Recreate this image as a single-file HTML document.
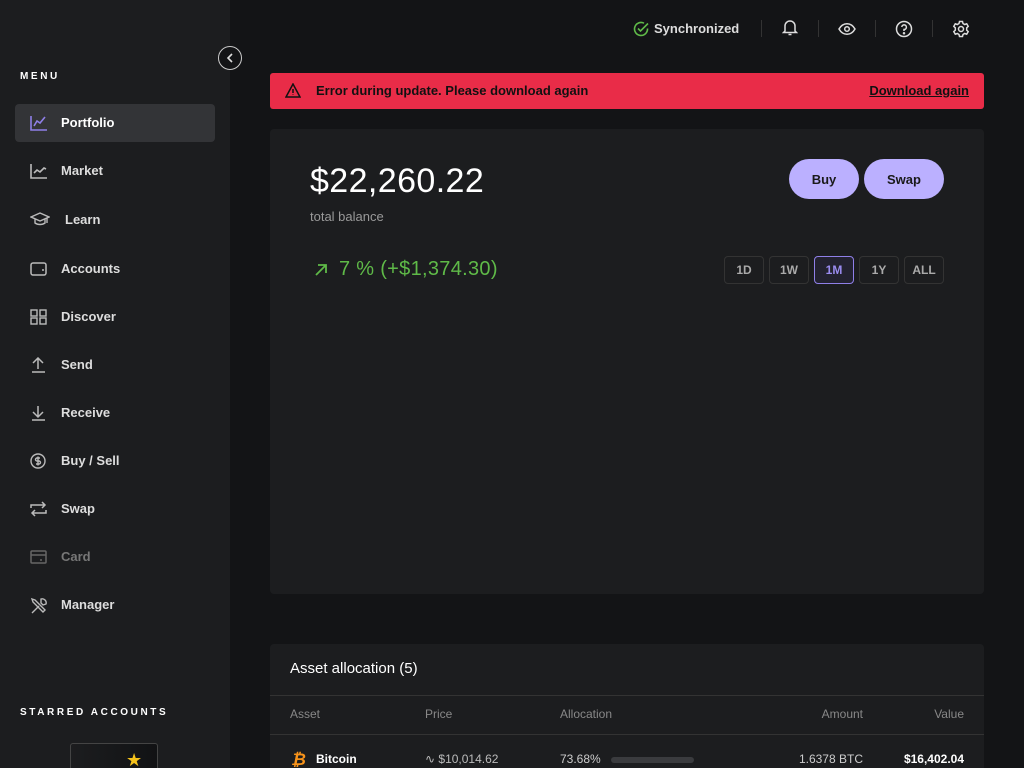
<!DOCTYPE html>
<html><head><style>
*{box-sizing:border-box;margin:0;padding:0}
html,body{width:1024px;height:768px;overflow:hidden}
body{background:#131416;font-family:"Liberation Sans",sans-serif;color:#fff;position:relative}
.side{position:absolute;left:0;top:0;width:230px;height:768px;background:#1c1d1f}
.lbl{position:absolute;left:20px;font-size:10px;font-weight:bold;letter-spacing:2.6px;color:#fff}
.item{position:absolute;left:15px;width:200px;height:38px;border-radius:4px;display:flex;align-items:center;font-size:13px;font-weight:bold;color:#ddd}
.item svg{position:absolute;left:15px;top:11px}
.item span{position:absolute;left:46px;top:11px}
.item.act{background:#333437;color:#fff}
.collapse{position:absolute;left:218px;top:46px;width:24px;height:24px;border-radius:50%;border:1px solid #ccc;background:#131416}
.top{position:absolute;top:21px;font-size:13px;font-weight:bold;color:#ddd}
.sep{position:absolute;top:20px;width:1px;height:17px;background:#333}
.err{position:absolute;left:270px;top:73px;width:714px;height:36px;background:#e92c48;border-radius:3px;color:#111;font-size:13px;font-weight:bold}
.card{position:absolute;left:270px;width:714px;background:#1c1d1f;border-radius:4px}
.btn{position:absolute;top:159px;height:40px;border-radius:20px;background:#bbb0ff;color:#1a1a1a;font-size:13px;font-weight:bold;display:flex;align-items:center;justify-content:center}
.rng{position:absolute;top:256px;width:40px;height:28px;border:1px solid #333;border-radius:4px;font-size:12px;font-weight:bold;color:#aaa;display:flex;align-items:center;justify-content:center}
.th{position:absolute;top:707px;font-size:12px;color:#888}
</style></head><body>
<div class="side">
<div class="lbl" style="top:71px">MENU</div>
<div class="item act" style="top:104px"><svg width="18" height="16" viewBox="0 0 18 16" fill="none" stroke="#8f7fe8" stroke-width="1.6"><path d="M1 1v14h16M4 11l3-5 3 2 5-6"/></svg><span>Portfolio</span></div>
<div class="item" style="top:152px"><svg width="18" height="16" viewBox="0 0 18 16" fill="none" stroke="#bbb" stroke-width="1.6"><path d="M1 1v14h16M4 10l3-3 3 2 4-4 2 1"/></svg><span>Market</span></div>
<div class="item" style="top:201px"><svg width="20" height="16" viewBox="0 0 20 16" fill="none" stroke="#bbb" stroke-width="1.4"><path d="M1 5l9-4 9 4-9 4zM5 7v4c3 2 7 2 10 0V7M17 6v5"/></svg><span style="left:50px">Learn</span></div>
<div class="item" style="top:250px"><svg width="18" height="16" viewBox="0 0 18 16" fill="none" stroke="#bbb" stroke-width="1.5"><rect x="1" y="2" width="15" height="12" rx="2"/><path d="M12 9h2"/></svg><span>Accounts</span></div>
<div class="item" style="top:298px"><svg width="18" height="16" viewBox="0 0 18 16" fill="none" stroke="#bbb" stroke-width="1.4"><rect x="1" y="1" width="6" height="6"/><rect x="10" y="1" width="6" height="6"/><rect x="1" y="9" width="6" height="6"/><rect x="10" y="9" width="6" height="6"/></svg><span>Discover</span></div>
<div class="item" style="top:346px"><svg width="18" height="16" viewBox="0 0 18 16" fill="none" stroke="#bbb" stroke-width="1.5"><path d="M8 12V1M3 6l5-5 5 5M2 15h13"/></svg><span>Send</span></div>
<div class="item" style="top:394px"><svg width="18" height="16" viewBox="0 0 18 16" fill="none" stroke="#bbb" stroke-width="1.5"><path d="M8 1v11M3 7l5 5 5-5M2 15h13"/></svg><span>Receive</span></div>
<div class="item" style="top:442px"><svg width="18" height="18" viewBox="0 0 18 18" fill="none" stroke="#bbb" stroke-width="1.4"><circle cx="8" cy="8" r="7"/><path d="M10 5H7a1.5 1.5 0 0 0 0 3h2a1.5 1.5 0 0 1 0 3H6M8 3.5v9"/></svg><span>Buy / Sell</span></div>
<div class="item" style="top:490px"><svg width="18" height="16" viewBox="0 0 18 16" fill="none" stroke="#bbb" stroke-width="1.5"><path d="M1 7V4h14M12 1l3 3-3 3M16 9v3H2M5 15l-3-3 3-3"/></svg><span>Swap</span></div>
<div class="item" style="top:538px;color:#777"><svg width="18" height="16" viewBox="0 0 18 16" fill="none" stroke="#666" stroke-width="1.5"><rect x="1" y="2" width="15" height="12" rx="1"/><path d="M1 6h15M10 11h2"/></svg><span>Card</span></div>
<div class="item" style="top:586px"><svg width="18" height="18" viewBox="0 0 18 18" fill="none" stroke="#bbb" stroke-width="1.4"><path d="M2 16l7-7M11 2a4 4 0 0 1 5 5l-3 1-2-2zM2 2l3 1 7 7 3 3-2 2-3-3-7-7z"/></svg><span>Manager</span></div>
<div class="lbl" style="top:707px">STARRED ACCOUNTS</div>
<div style="position:absolute;left:70px;top:743px;width:88px;height:30px;border:1px solid #444;border-radius:3px;background:linear-gradient(90deg,#1c1d1f,#111214)"></div>
<div style="position:absolute;left:126px;top:750px;color:#f5c21b;font-size:18px">★</div>
</div>
<div class="collapse"><svg width="22" height="22" viewBox="0 0 22 22" fill="none" stroke="#ddd" stroke-width="1.6"><path d="M13 7l-4 4 4 4"/></svg></div>

<svg style="position:absolute;left:633px;top:21px" width="16" height="16" viewBox="0 0 16 16" fill="none" stroke="#5fba48" stroke-width="1.6"><path d="M14.5 7.5A6.5 6.5 0 1 1 11 2.2"/><path d="M5 7.5l2.5 2.5L15 2.5"/></svg>
<div class="top" style="left:654px">Synchronized</div>
<div class="sep" style="left:761px"></div>
<svg style="position:absolute;left:782px;top:19px" width="16" height="17" viewBox="0 0 16 17" fill="none" stroke="#ddd" stroke-width="1.5"><path d="M3 12V7a5 5 0 0 1 10 0v5l1.5 1.5h-13zM6.5 15.5h3"/></svg>
<div class="sep" style="left:818px"></div>
<svg style="position:absolute;left:838px;top:22px" width="18" height="14" viewBox="0 0 18 14" fill="none" stroke="#ddd" stroke-width="1.5"><path d="M1 7c4-7 12-7 16 0-4 7-12 7-16 0z"/><circle cx="9" cy="7" r="2.3"/></svg>
<div class="sep" style="left:875px"></div>
<svg style="position:absolute;left:895px;top:20px" width="18" height="18" viewBox="0 0 18 18" fill="none" stroke="#ddd" stroke-width="1.5"><circle cx="9" cy="9" r="7.5"/><path d="M6.8 7a2.3 2.3 0 1 1 2.2 2.5v1.5"/><circle cx="9" cy="13.3" r=".5" fill="#ddd"/></svg>
<div class="sep" style="left:932px"></div>
<svg style="position:absolute;left:952px;top:20px" width="18" height="18" viewBox="0 0 18 18" fill="none" stroke="#ddd" stroke-width="1.5"><circle cx="9" cy="9" r="2.5"/><path d="M7.5 1.5h3l.5 2 1.7 1 2-.7 1.5 2.6-1.5 1.4v2.4l1.5 1.4-1.5 2.6-2-.7-1.7 1-.5 2h-3l-.5-2-1.7-1-2 .7-1.5-2.6 1.5-1.4V7.8L1.8 6.4l1.5-2.6 2 .7 1.7-1z"/></svg>

<div class="err">
<svg style="position:absolute;left:15px;top:10px" width="16" height="15" viewBox="0 0 16 15" fill="none" stroke="#111" stroke-width="1.5"><path d="M8 1L1 14h14z M8 6v4M8 11.5v.5"/></svg>
<div style="position:absolute;left:46px;top:10px">Error during update. Please download again</div>
<div style="position:absolute;right:15px;top:10px;text-decoration:underline">Download again</div>
</div>

<div class="card" style="top:129px;height:465px"></div>
<div style="position:absolute;left:310px;top:162px;font-size:34px;letter-spacing:0.4px;color:#fff">$22,260.22</div>
<div style="position:absolute;left:310px;top:209px;font-size:13px;color:#999">total balance</div>
<div class="btn" style="left:789px;width:70px">Buy</div>
<div class="btn" style="left:864px;width:80px">Swap</div>
<svg style="position:absolute;left:314px;top:263px" width="14" height="14" viewBox="0 0 14 14" fill="none" stroke="#5fba48" stroke-width="1.8"><path d="M2 12L12 2M4 2h8v8"/></svg>
<div style="position:absolute;left:339px;top:258px;font-size:20px;letter-spacing:0.3px;color:#5fba48">7 % (+$1,374.30)</div>
<div class="rng" style="left:724px">1D</div>
<div class="rng" style="left:769px">1W</div>
<div class="rng" style="left:814px;border-color:#8f7fe8;color:#9a8cf0;background:#232230">1M</div>
<div class="rng" style="left:859px">1Y</div>
<div class="rng" style="left:904px">ALL</div>

<div class="card" style="top:644px;height:124px;border-radius:4px 4px 0 0"></div>
<div style="position:absolute;left:290px;top:660px;font-size:15px;color:#fff">Asset allocation (5)</div>
<div style="position:absolute;left:270px;top:695px;width:714px;height:1px;background:#333"></div>
<div style="position:absolute;left:270px;top:734px;width:714px;height:1px;background:#333"></div>
<div class="th" style="left:290px">Asset</div>
<div class="th" style="left:425px">Price</div>
<div class="th" style="left:560px">Allocation</div>
<div class="th" style="right:161px">Amount</div>
<div class="th" style="right:60px">Value</div>
<div style="position:absolute;left:291px;top:750px;color:#f7931a;font-size:17px;font-weight:bold;font-style:italic">₿</div>
<div style="position:absolute;left:316px;top:752px;font-size:12px;font-weight:bold">Bitcoin</div>
<div style="position:absolute;left:425px;top:752px;font-size:12px;color:#bbb">∿ $10,014.62</div>
<div style="position:absolute;left:560px;top:752px;font-size:12px;color:#ccc">73.68%</div>
<div style="position:absolute;left:611px;top:757px;width:83px;height:6px;border-radius:3px;background:#3a3b3e"></div>
<div style="position:absolute;right:161px;top:752px;font-size:12px;color:#ccc">1.6378 BTC</div>
<div style="position:absolute;right:60px;top:752px;font-size:12px;font-weight:bold">$16,402.04</div>
</body></html>
